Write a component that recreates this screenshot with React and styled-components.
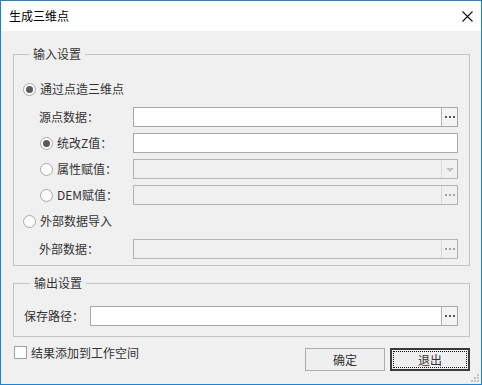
import React from 'react';
import styled, {createGlobalStyle} from 'styled-components';

const GlobalStyle = createGlobalStyle`
    body {
        margin: 0;
        font-family: "Noto Sans CJK SC", "Noto Sans", sans-serif;
        font-size: 12px;
        color: #333;
    }
`

const Window = styled.div`
    position: relative;
    width: 482px;
    height: 385px;
    box-sizing: border-box;
    border: 1px solid #1a83d6;
    background: #f0f0f0;
    display: flex;
    flex-direction: column;
`

const TitleBar = styled.div`
    height: 30px;
    background: #fff;
    display: flex;
    align-items: center;
    justify-content: space-between;
    padding-left: 8px;
    color: #000;
    font-size: 12px;
    line-height: 16px;
`

const CloseBox = styled.div`
    width: 28px;
    height: 30px;
    display: flex;
    align-items: center;
    justify-content: center;
`

const Body = styled.div`
    padding: 15px 11px 0 12px;
    display: flex;
    flex-direction: column;
`

const Group = styled.fieldset`
    margin: ${props => props.$top || 0}px 0 0 0;
    border: 1px solid #c4c4c4;
    padding: ${props => props.$pad};
    min-width: 0;
    display: flex;
    flex-direction: column;
    gap: 6px;
`

const Legend = styled.legend`
    margin-left: 6px;
    padding: 0 4px;
    font-size: 12px;
    line-height: 16px;
    color: #333;
`

const Row = styled.div`
    display: grid;
    grid-template-columns: ${props => props.$label || 110}px 1fr;
    align-items: center;
    height: 20px;
    margin-bottom: ${props => props.$head ? 2 : 0}px;
`

const Label = styled.span`
    padding-left: ${props => props.$indent || 0}px;
    line-height: 16px;
    white-space: nowrap;
`

const RadioLabel = styled.label`
    display: flex;
    align-items: center;
    gap: 4px;
    padding-left: ${props => props.$indent || 0}px;
    line-height: 16px;
    white-space: nowrap;
`

const Radio = styled.span`
    width: 13px;
    height: 13px;
    box-sizing: border-box;
    border-radius: 50%;
    border: 1px solid #a9a9a9;
    background: #fcfcfc;
    display: flex;
    align-items: center;
    justify-content: center;
    flex: none;

    &::before {
        content: "";
        width: 7px;
        height: 7px;
        border-radius: 50%;
        background: ${props => props.$checked ? '#5b5b5b' : 'transparent'};
    }
`

const Field = styled.div`
    height: 20px;
    box-sizing: border-box;
    border: 1px solid ${props => props.$disabled ? '#b3b3b3' : '#a7a7a7'};
    background: ${props => props.$disabled ? '#f0f0f0' : '#fff'};
    display: flex;
    justify-content: flex-end;
`

const SideButton = styled.div`
    width: 15px;
    border-left: 1px solid ${props => props.$disabled ? '#dadada' : '#b3b3b3'};
    background: ${props => props.$disabled ? '#f0f0f0' : '#f4f4f4'};
    display: flex;
    align-items: center;
    justify-content: center;
    gap: 2px;
`

const Dot = styled.span`
    width: 2px;
    height: 2px;
    background: ${props => props.$disabled ? '#a3a3a3' : '#555'};
`

const Arrow = styled.span`
    width: 0;
    height: 0;
    border-left: 4px solid transparent;
    border-right: 4px solid transparent;
    border-top: 4px solid #c2c2c2;
    margin-top: 1px;
`

const Footer = styled.div`
    display: flex;
    justify-content: space-between;
    align-items: flex-start;
    padding-top: 9px;
`

const CheckLabel = styled.label`
    display: flex;
    align-items: center;
    gap: 4px;
    margin-left: 1px;
    line-height: 13px;
`

const CheckBox = styled.span`
    width: 13px;
    height: 13px;
    box-sizing: border-box;
    border: 1px solid #9f9f9f;
    background: #fff;
`

const Buttons = styled.div`
    display: flex;
    gap: 5px;
    margin-top: 2px;
`

const Button = styled.button`
    position: relative;
    width: 80px;
    height: 23px;
    box-sizing: border-box;
    padding: 0;
    font-family: inherit;
    font-size: 12px;
    color: #333;
    background: #efefef;
    border: 1px solid ${props => props.$focus ? '#3a3a3a' : '#adadad'};
    box-shadow: ${props => props.$focus ? 'inset 0 0 0 1px #3a3a3a' : 'none'};

    &::after {
        content: "";
        display: ${props => props.$focus ? 'block' : 'none'};
        position: absolute;
        inset: 2px;
        border: 1px dotted #111;
    }
`

const Grip = styled.svg`
    position: absolute;
    right: 1px;
    bottom: 1px;
`

function InputBox({disabled, kind}) {
    return (
        <Field $disabled={disabled}>
            {kind === 'browse' && (
                <SideButton $disabled={disabled}>
                    <Dot $disabled={disabled} /><Dot $disabled={disabled} /><Dot $disabled={disabled} />
                </SideButton>
            )}
            {kind === 'combo' && (
                <SideButton $disabled={disabled}>
                    <Arrow />
                </SideButton>
            )}
        </Field>
    )
}

export default function App() {
    return (
        <Window>
            <GlobalStyle />
            <TitleBar>
                <span>生成三维点</span>
                <CloseBox>
                    <svg width="11" height="11" viewBox="0 0 11 11">
                        <path d="M0.5 0.5 L10.5 10.5 M10.5 0.5 L0.5 10.5" stroke="#111" strokeWidth="1.1" fill="none" />
                    </svg>
                </CloseBox>
            </TitleBar>
            <Body>
                <Group $pad="17px 11px 6px 9px">
                    <Legend>输入设置</Legend>
                    <Row $head>
                        <RadioLabel><Radio $checked />通过点造三维点</RadioLabel>
                    </Row>
                    <Row>
                        <Label $indent={16}>源点数据：</Label>
                        <InputBox kind="browse" />
                    </Row>
                    <Row>
                        <RadioLabel $indent={17}><Radio $checked />统改Z值：</RadioLabel>
                        <InputBox />
                    </Row>
                    <Row>
                        <RadioLabel $indent={17}><Radio />属性赋值：</RadioLabel>
                        <InputBox kind="combo" disabled />
                    </Row>
                    <Row>
                        <RadioLabel $indent={17}><Radio />DEM赋值：</RadioLabel>
                        <InputBox kind="browse" disabled />
                    </Row>
                    <Row $head>
                        <RadioLabel><Radio />外部数据导入</RadioLabel>
                    </Row>
                    <Row>
                        <Label $indent={16}>外部数据：</Label>
                        <InputBox kind="browse" disabled />
                    </Row>
                </Group>
                <Group $top={9} $pad="15px 11px 10px 10px">
                    <Legend>输出设置</Legend>
                    <Row $label={66}>
                        <Label>保存路径：</Label>
                        <InputBox kind="browse" />
                    </Row>
                </Group>
                <Footer>
                    <CheckLabel><CheckBox />结果添加到工作空间</CheckLabel>
                    <Buttons>
                        <Button>确定</Button>
                        <Button $focus>退出</Button>
                    </Buttons>
                </Footer>
            </Body>
            <Grip width="10" height="10" viewBox="0 0 10 10">
                <rect x="7" y="1" width="2" height="2" fill="#c4c4c4" />
                <rect x="4" y="4" width="2" height="2" fill="#c4c4c4" />
                <rect x="7" y="4" width="2" height="2" fill="#c4c4c4" />
                <rect x="1" y="7" width="2" height="2" fill="#c4c4c4" />
                <rect x="4" y="7" width="2" height="2" fill="#c4c4c4" />
                <rect x="7" y="7" width="2" height="2" fill="#c4c4c4" />
            </Grip>
        </Window>
    )
}
